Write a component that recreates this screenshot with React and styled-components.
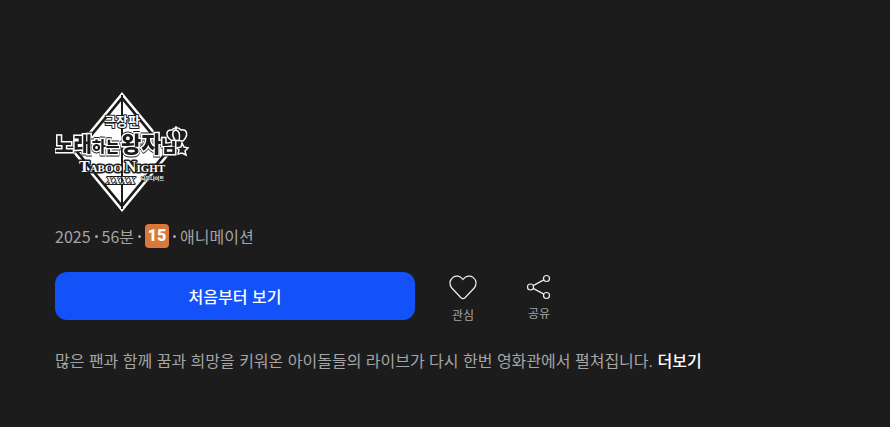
import React from 'react'
import styled, { createGlobalStyle } from 'styled-components'

export default class App extends React.Component {
  render() {
    return (
      <React.Fragment>
        <GlobalStyle />
        <Hero>
          <TitleHeading>
            <TitleLogo />
          </TitleHeading>
          <MetaList>
            <MetaItem>2025</MetaItem>
            <MetaItem>56분</MetaItem>
            <MetaItem>
              <AgeBadge>15</AgeBadge>
            </MetaItem>
            <MetaItem>애니메이션</MetaItem>
          </MetaList>
          <Actions>
            <PlayButton type="button">처음부터 보기</PlayButton>
            <IconButton type="button" $gap={2}>
              <HeartIcon />
              관심
            </IconButton>
            <IconButton type="button">
              <ShareIcon />
              공유
            </IconButton>
          </Actions>
          <Synopsis>
            많은 팬과 함께 꿈과 희망을 키워온 아이돌들의 라이브가 다시 한번 영화관에서 펼쳐집니다.{' '}
            <MoreButton type="button">더보기</MoreButton>
          </Synopsis>
        </Hero>
      </React.Fragment>
    )
  }
}

const TitleLogo = () => (
  <LogoSvg viewBox="0 0 136 120" role="img" aria-label="극장판 노래하는 왕자님 TABOO NIGHT XXXX">
    <path d="M67 2 L115 60 L67 118 L19 60 Z" fill="none" stroke="#fff" strokeWidth="2.5" />
    <path d="M67 8 L110 60 L67 112 L24 60 Z" fill="#fff" />
    <path d="M67 3 V117" stroke="#1c1c1c" strokeWidth="2" />
    <LogoText x="49" y="34" size={13} edge={2}>극장판</LogoText>
    <OutlinedText x="0" y="60" size={20}>노래</OutlinedText>
    <OutlinedText x="37" y="60" size={15}>하는</OutlinedText>
    <OutlinedText x="66" y="60" size={22}>왕자</OutlinedText>
    <OutlinedText x="106" y="60" size={17}>님</OutlinedText>
    <LogoText x="24" y="80" size={11} edge={3} $latin>
      <Initial>T</Initial>ABOO <Initial>N</Initial>IGHT
    </LogoText>
    <LogoText x="51" y="92" size={11} edge={2} $latin $slanted>XXXX</LogoText>
    <LogoText x="86" y="88" size={5} edge={1}>타부나이트</LogoText>
    <g fill="#1c1c1c" stroke="#fff" strokeWidth="1.5">
      <path d="M116 48 C110 44 111 37 117 38 C119 35 124 35 126 38 C132 37 134 43 128 49 Z" />
      <path d="M120 48 C116 43 118 38 121 38 C125 39 125 44 124 49 M121 38 V34" fill="none" />
      <path d="M127 51 L129 55 L133 56 L130 59 L131 63 L127 61 L123 62 L124 58 L122 56 L126 55 Z" />
    </g>
  </LogoSvg>
)

const HeartIcon = () => (
  <Icon viewBox="0 0 32 32">
    <path d="M16 7.5 C13.4 3.8 8.9 3.1 5.9 5.4 C2.3 8.2 2.1 12.8 4.8 16 L13.7 25.5 C15 26.7 17 26.7 18.3 25.5 L27.2 16 C29.9 12.8 29.7 8.2 26.1 5.4 C23.1 3.1 18.6 3.8 16 7.5 Z" />
  </Icon>
)

const ShareIcon = () => (
  <Icon viewBox="0 0 32 32">
    <circle cx="7.5" cy="15" r="3" />
    <circle cx="23.5" cy="6.5" r="3" />
    <circle cx="23.5" cy="23.5" r="3" />
    <path d="M10.2 13.6 L20.8 7.9 M10.2 16.4 L20.8 22.1" />
  </Icon>
)

const GlobalStyle = createGlobalStyle`
  * {
    box-sizing: border-box;
  }

  body {
    margin: 0;
    background: #1c1c1c;
    color: #a5a5a5;
    font-family: "Noto Sans CJK KR", sans-serif;
    font-size: 16px;
    line-height: 24px;
  }

  button {
    padding: 0;
    border: 0;
    background: none;
    color: inherit;
    font: inherit;
    cursor: pointer;
  }
`

const Hero = styled.main`
  padding: 92px 55px 48px;
`

const TitleHeading = styled.h1`
  display: flex;
  margin: 0 0 12px;
`

const LogoSvg = styled.svg`
  width: 136px;
  height: 120px;
`

const LogoText = styled.text`
  fill: #fff;
  stroke: #1c1c1c;
  stroke-width: ${props => props.edge}px;
  stroke-linejoin: round;
  paint-order: stroke;
  font-family: ${props => (props.$latin ? '"Liberation Serif", serif' : '"Noto Sans CJK KR", sans-serif')};
  font-size: ${props => props.size}px;
  font-style: ${props => (props.$slanted ? 'italic' : 'normal')};
  font-weight: 700;
`

const Initial = styled.tspan`
  font-size: 16px;
`

const OutlinedText = styled.text`
  fill: #1c1c1c;
  stroke: #fff;
  stroke-width: 3px;
  paint-order: stroke;
  font-family: "Noto Sans CJK KR", sans-serif;
  font-size: ${props => props.size}px;
  font-weight: 900;
  filter: drop-shadow(0 1px 0 #1c1c1c) drop-shadow(0 -1px 0 #1c1c1c);
`

const MetaList = styled.ul`
  display: flex;
  align-items: center;
  margin: 0 0 24px;
  padding: 0;
  list-style: none;
`

const MetaItem = styled.li`
  display: flex;
  align-items: center;

  & + &::before {
    content: '';
    width: 3px;
    height: 3px;
    margin: 0 4px;
    border-radius: 50%;
    background: #a5a5a5;
  }
`

const AgeBadge = styled.span`
  width: 24px;
  height: 24px;
  border-radius: 4px;
  background: #d9783a;
  color: #fff;
  font-family: Roboto, sans-serif;
  font-size: 16px;
  font-weight: 900;
  text-align: center;
`

const Actions = styled.div`
  display: flex;
  align-items: flex-start;
  margin-bottom: 26px;
`

const PlayButton = styled.button`
  flex: 0 1 360px;
  height: 48px;
  margin-right: 10px;
  padding-top: 3px;
  border-radius: 12px;
  background: #1351f9;
  color: #fff;
  font-family: "Liberation Sans", "Noto Sans CJK KR", sans-serif;
  font-weight: 500;
`

const IconButton = styled.button`
  display: flex;
  flex-direction: column;
  align-items: center;
  gap: ${props => props.$gap || 0}px;
  width: 76px;
  font-size: 12px;
  line-height: 18px;
`

const Icon = styled.svg`
  width: 32px;
  height: 32px;
  fill: none;
  stroke: #eee;
  stroke-width: 1.2;
`

const Synopsis = styled.p`
  margin: 0;
  font-family: "Liberation Sans", "Noto Sans CJK KR", sans-serif;
`

const MoreButton = styled.button`
  color: #fff;
  font-weight: 500;
`
